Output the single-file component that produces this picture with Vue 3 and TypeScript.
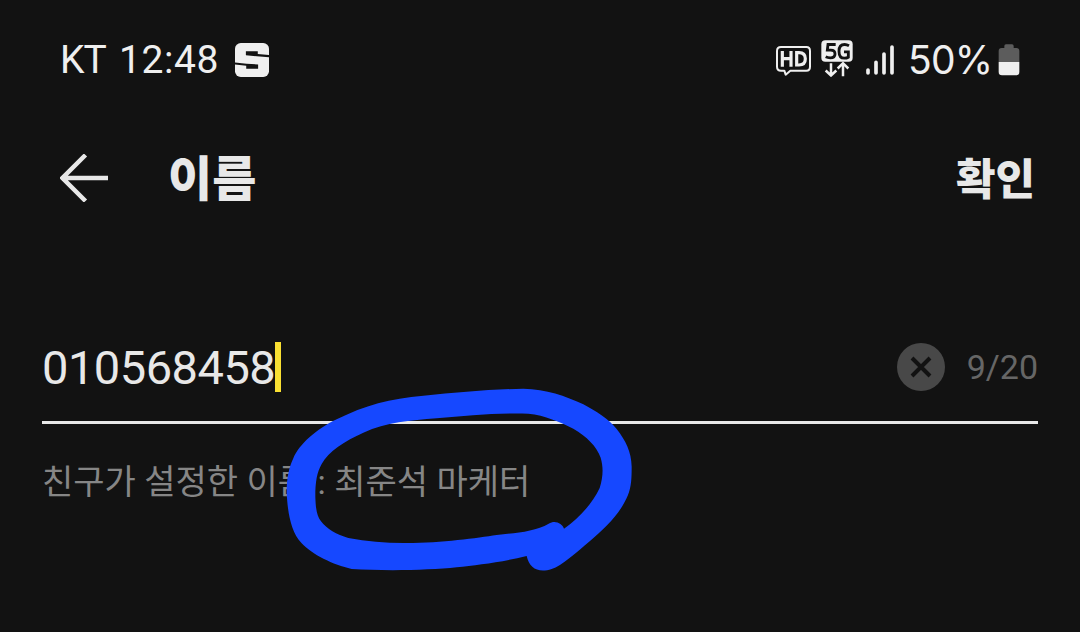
<script setup lang="ts">

import {computed, ref} from "vue";

const maxLength = 20;

const name = ref('010568458');
const friendName = '최준석 마케터';

const counter = computed(() => `${name.value.length}/${maxLength}`);

function clearName() {
  name.value = '';
}

</script>

<template>
  <div class="screen">
    <div class="statusBar">
      <span class="carrier">KT</span>
      <span class="clock">12:48</span>
      <svg class="appIcon" viewBox="0 0 100 100">
        <rect width="100" height="100" rx="17" fill="#efefef"/>
        <path d="M32 24H67V32L100 35V42L64 39L32 36ZM0 57L34 61L68 63V76H33V67L0 63Z" fill="#121212"/>
      </svg>
      <div class="statusRight">
        <svg class="hdIcon" viewBox="0 0 105 90">
          <path d="M15 3H91Q102 3 102 15V62Q102 74 91 74H43L29 86L25 74H15Q3 74 3 62V15Q3 3 15 3Z" fill="none" stroke="#efefef" stroke-width="6" stroke-linejoin="round"/>
          <path d="M19 15V62M45 15V62M19 38H45" fill="none" stroke="#efefef" stroke-width="9.500"/>
          <path d="M62 20V57H69Q88 57 88 38.500Q88 20 69 20Z" fill="none" stroke="#efefef" stroke-width="9.500"/>
        </svg>
        <svg class="netIcon" viewBox="0 0 96 110">
          <rect x="1" y="0" width="94" height="65" rx="12" fill="#efefef"/>
          <path d="M44 13H21L19 30H29Q42 30 42 41.500Q42 53 28 53Q20 53 14 50M84 17Q77 13 71 13Q54 13 54 33Q54 54 70 54Q77 54 82 51V35H69" fill="none" stroke="#121212" stroke-width="8.500"/>
          <path d="M30 69V105M14 91L30 106L46 91M66 108V71M50 85L66 69L82 85" fill="none" stroke="#efefef" stroke-width="7.500"/>
        </svg>
        <svg class="signalIcon" viewBox="0 0 84 90">
          <path d="M6 75V84M30 52V84M54 27V84M78 6V84" fill="none" stroke="#efefef" stroke-width="11" stroke-linecap="round"/>
        </svg>
        <span class="percent">50%</span>
        <svg class="batteryIcon" viewBox="0 0 64 96">
          <path d="M18 12V6Q18 1 23 1H41Q46 1 46 6V12H54Q63 12 63 21V54H1V21Q1 12 10 12Z" fill="#5c5c5c"/>
          <path d="M1 54H63V84Q63 94 53 94H11Q1 94 1 84Z" fill="#efefef"/>
        </svg>
      </div>
    </div>

    <div class="header">
      <svg class="backIcon" viewBox="0 0 48 48">
        <path d="M25.500 1L2.500 24L25.500 47M2.500 24H48" fill="none" stroke="#e8e8e8" stroke-width="4.500"/>
      </svg>
      <h1>이름</h1>
      <button class="confirm">확인</button>
    </div>

    <div class="field">
      <span class="value">{{ name }}</span>
      <span class="caret"></span>
      <button class="clear" @click="clearName()">
        <svg viewBox="0 0 48 48">
          <circle cx="24" cy="24" r="24" fill="#484848"/>
          <path d="M15 15L33 33M33 15L15 33" stroke="#121212" stroke-width="4"/>
        </svg>
      </button>
      <span class="counter">{{ counter }}</span>
    </div>

    <p class="hint">친구가 설정한 이름 : {{ friendName }}</p>

    <!-- hand drawn marker around the friend's name -->
    <svg class="marker" viewBox="0 0 1140 600">
      <path fill="#1648ff" fill-rule="evenodd" d="M50 340C50 295 56 265 70 235C86 195 140 146 200 118C285 75 360 56 460 47C560 37 660 28 760 26C830 28 885 47 940 73C980 94 1015 117 1040 147C1067 182 1084 215 1085 260C1085 295 1084 320 1074 345C1050 402 1010 440 960 483C920 517 875 558 845 567C805 580 778 565 770 528C690 548 620 555 560 562C480 571 340 573 245 567C190 555 125 523 95 490C60 453 53 390 50 340ZM136 350C136 305 141 277 155 252C175 215 225 182 280 158C350 127 420 121 500 115C590 107 680 98 775 101C825 106 870 126 910 146C950 170 980 198 992 233C1000 260 1000 290 989 324C967 371 925 417 882 446C877 430 855 419 836 431C795 455 735 459 680 465C620 474 510 490 400 489C345 489 290 485 235 474C200 464 170 447 153 424C138 405 137 375 136 350Z"/>
    </svg>
  </div>
</template>

<style>
body {
  margin: 0;
  background: #121212;
}
</style>

<style scoped>

.screen {
  position: relative;
  box-sizing: border-box;
  width: 1080px;
  height: 632px;
  overflow: hidden;
  background: #121212;
  color: #e8e8e8;
  font-family: Roboto, "Noto Sans CJK KR", sans-serif;
}

.statusBar {
  display: flex;
  align-items: flex-start;
  height: 80px;
  padding: 40px 60px 0 60px;
  box-sizing: border-box;
  color: #efefef;
  font-size: 39px;
  line-height: 40px;
}

.carrier {
  width: 59px;
  letter-spacing: -1px;
}

.clock {
  width: 116px;
  letter-spacing: 0.6px;
}

.appIcon {
  width: 34px;
  height: 34px;
  margin-top: 3px;
}

.statusRight {
  display: flex;
  align-items: flex-start;
  margin-left: auto;
}

.hdIcon {
  width: 35px;
  height: 30px;
  margin: 6px 10px 0 0;
}

.netIcon {
  width: 32px;
  height: 37px;
  margin-right: 13px;
}

.signalIcon {
  width: 28px;
  height: 30px;
  margin: 5px 14px 0 0;
}

.percent {
  width: 90px;
  font-family: Inter, sans-serif;
  letter-spacing: -0.8px;
}

.batteryIcon {
  width: 22px;
  height: 32px;
  margin-top: 4px;
}

.header {
  display: flex;
  align-items: center;
  height: 196px;
  padding: 0 45px 0 60px;
}

.backIcon {
  width: 48px;
  height: 48px;
}

h1 {
  margin: 4px 0 0 60px;
  font-size: 48px;
  font-weight: 900;
  line-height: 60px;
}

button {
  padding: 0;
  border: none;
  background: none;
  color: inherit;
  font-family: inherit;
}

.confirm {
  margin: 3px 0 0 auto;
  font-size: 43px;
  font-weight: 900;
  line-height: 60px;
}

.field {
  display: flex;
  align-items: center;
  height: 109px;
  margin: 39px 42px 0 42px;
  padding-bottom: 3px;
  box-sizing: border-box;
  border-bottom: 3px solid #e8e8e8;
}

.value {
  padding-top: 2px;
  font-size: 47px;
  line-height: 60px;
  letter-spacing: -0.5px;
}

.caret {
  width: 6px;
  height: 50px;
  background: #fae032;
}

.clear {
  height: 48px;
  margin-left: auto;
}

.clear svg {
  display: block;
  width: 48px;
  height: 48px;
}

.counter {
  margin-left: 22px;
  color: #666666;
  font-size: 34px;
}

.hint {
  margin: 33px 0 0 42px;
  color: #868686;
  font-size: 34px;
  line-height: 50px;
  white-space: nowrap;
}

.marker {
  position: absolute;
  left: 270px;
  top: 380px;
  width: 380px;
  height: 200px;
}

</style>
